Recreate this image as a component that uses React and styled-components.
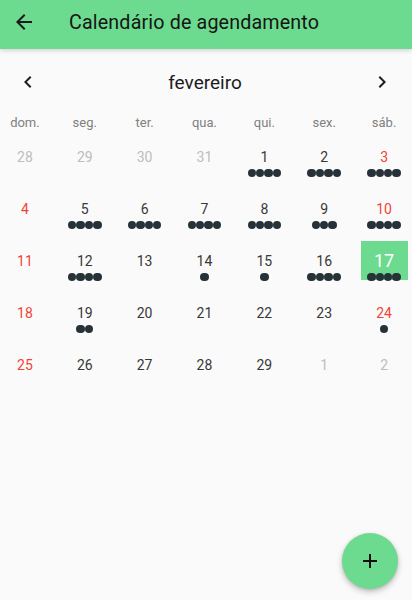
import React from 'react';
import styled, { createGlobalStyle } from 'styled-components';

const GlobalStyle = createGlobalStyle`
  body {
    margin: 0;
    background: #fafafa;
    font-family: Roboto, "Noto Sans", sans-serif;
    overflow-x: hidden;
  }
`;

const Page = styled.div`
  min-height: 600px;
  background: #fafafa;
  position: relative;
`;

const AppBar = styled.header`
  height: 49px;
  background: #6cdb8f;
  display: flex;
  align-items: center;
  padding: 0 0 5px 12px;
  box-sizing: border-box;
  box-shadow: 0 2px 4px rgba(0, 0, 0, 0.14);
`;

const IconButton = styled.button`
  border: none;
  background: none;
  padding: 0;
  width: 24px;
  height: 24px;
  display: flex;
  align-items: center;
  justify-content: center;
  color: #1a1a1a;
  cursor: pointer;
`;

const Title = styled.h1`
  margin: 0 0 0 33px;
  font-size: 19.7px;
  font-weight: 400;
  color: #151515;
  letter-spacing: 0.15px;
`;

const MonthHeader = styled.div`
  margin-top: 9px;
  height: 48px;
  display: flex;
  align-items: center;
  justify-content: space-between;
  padding: 0 18px 0 16px;
`;

const MonthName = styled.span`
  font-size: 19px;
  color: #1c1c1c;
`;

const Grid = styled.div`
  display: grid;
  grid-template-columns: repeat(7, 1fr);
  width: 419px;
  margin-left: -5px;
`;

const WeekDay = styled.div`
  height: 32px;
  display: flex;
  align-items: center;
  justify-content: center;
  font-size: 13px;
  color: #808080;
`;

const Cell = styled.div`
  height: 52px;
  display: flex;
  justify-content: center;
`;

const DayBox = styled.div`
  width: 47px;
  height: 39px;
  margin-top: -1px;
  display: flex;
  flex-direction: column;
  align-items: center;
  background: ${(p) => (p.$selected ? '#6cdb8f' : 'transparent')};
  padding-top: ${(p) => (p.$selected ? '10px' : '11px')};
  box-sizing: border-box;
`;

const tones = {
  normal: '#383838',
  weekend: '#f44336',
  muted: '#bdbdbd',
  selected: '#ffffff',
};

const DayNumber = styled.span`
  font-size: ${(p) => (p.$tone === 'selected' ? '18px' : '14px')};
  line-height: ${(p) => (p.$tone === 'selected' ? '20px' : '18px')};
  color: ${(p) => tones[p.$tone]};
`;

const Dots = styled.div`
  display: flex;
  margin-top: ${(p) => (p.$selected ? '2px' : '3px')};
`;

const Dot = styled.span`
  width: 8.4px;
  height: 8.4px;
  border-radius: 50%;
  background: #263238;
`;

const Fab = styled.button`
  position: absolute;
  right: 14px;
  top: 533px;
  width: 56px;
  height: 56px;
  border-radius: 50%;
  border: none;
  background: #6cdb8f;
  box-shadow: 0 3px 6px rgba(0, 0, 0, 0.22), 0 1px 3px rgba(0, 0, 0, 0.12);
  display: flex;
  align-items: center;
  justify-content: center;
  color: #111;
  cursor: pointer;
`;

const ArrowBack = () => (
  <svg width="24" height="24" viewBox="0 0 24 24" fill="currentColor">
    <path d="M20 11H7.83l5.59-5.59L12 4l-8 8 8 8 1.41-1.41L7.83 13H20v-2z" />
  </svg>
);

const Chevron = ({ right }) => (
  <svg width="24" height="24" viewBox="0 0 24 24" fill="#1e1e1e">
    {right ? (
      <path d="M10 6L8.59 7.41 13.17 12l-4.58 4.59L10 18l6-6z" />
    ) : (
      <path d="M15.41 7.41L14 6l-6 6 6 6 1.41-1.41L10.83 12z" />
    )}
  </svg>
);

const PlusIcon = () => (
  <svg width="24" height="24" viewBox="0 0 24 24" fill="currentColor">
    <path d="M19 13h-6v6h-2v-6H5v-2h6V5h2v6h6v2z" />
  </svg>
);

const weekDays = ['dom.', 'seg.', 'ter.', 'qua.', 'qui.', 'sex.', 'sáb.'];

// [day, events, outside month]
const days = [
  [28, 0, true], [29, 0, true], [30, 0, true], [31, 0, true], [1, 4], [2, 4], [3, 4],
  [4, 0], [5, 4], [6, 4], [7, 4], [8, 4], [9, 3], [10, 4],
  [11, 0], [12, 4], [13, 0], [14, 1], [15, 1], [16, 4], [17, 4],
  [18, 0], [19, 2], [20, 0], [21, 0], [22, 0], [23, 0], [24, 1],
  [25, 0], [26, 0], [27, 0], [28, 0], [29, 0], [1, 0, true], [2, 0, true],
];

const SELECTED = 17;

export default function App() {
  return (
    <Page>
      <GlobalStyle />
      <AppBar>
        <IconButton aria-label="Voltar">
          <ArrowBack />
        </IconButton>
        <Title>Calendário de agendamento</Title>
      </AppBar>

      <MonthHeader>
        <IconButton aria-label="Mês anterior">
          <Chevron />
        </IconButton>
        <MonthName>fevereiro</MonthName>
        <IconButton aria-label="Próximo mês">
          <Chevron right />
        </IconButton>
      </MonthHeader>

      <Grid>
        {weekDays.map((d) => (
          <WeekDay key={d}>{d}</WeekDay>
        ))}
        {days.map(([day, events, outside], i) => {
          const col = i % 7;
          const selected = !outside && day === SELECTED;
          let tone = 'normal';
          if (outside) tone = 'muted';
          else if (selected) tone = 'selected';
          else if (col === 0 || col === 6) tone = 'weekend';
          return (
            <Cell key={i}>
              <DayBox $selected={selected}>
                <DayNumber $tone={tone}>{day}</DayNumber>
                {events > 0 && (
                  <Dots $selected={selected}>
                    {Array.from({ length: events }).map((_, j) => (
                      <Dot key={j} />
                    ))}
                  </Dots>
                )}
              </DayBox>
            </Cell>
          );
        })}
      </Grid>

      <Fab aria-label="Novo agendamento">
        <PlusIcon />
      </Fab>
    </Page>
  );
}
